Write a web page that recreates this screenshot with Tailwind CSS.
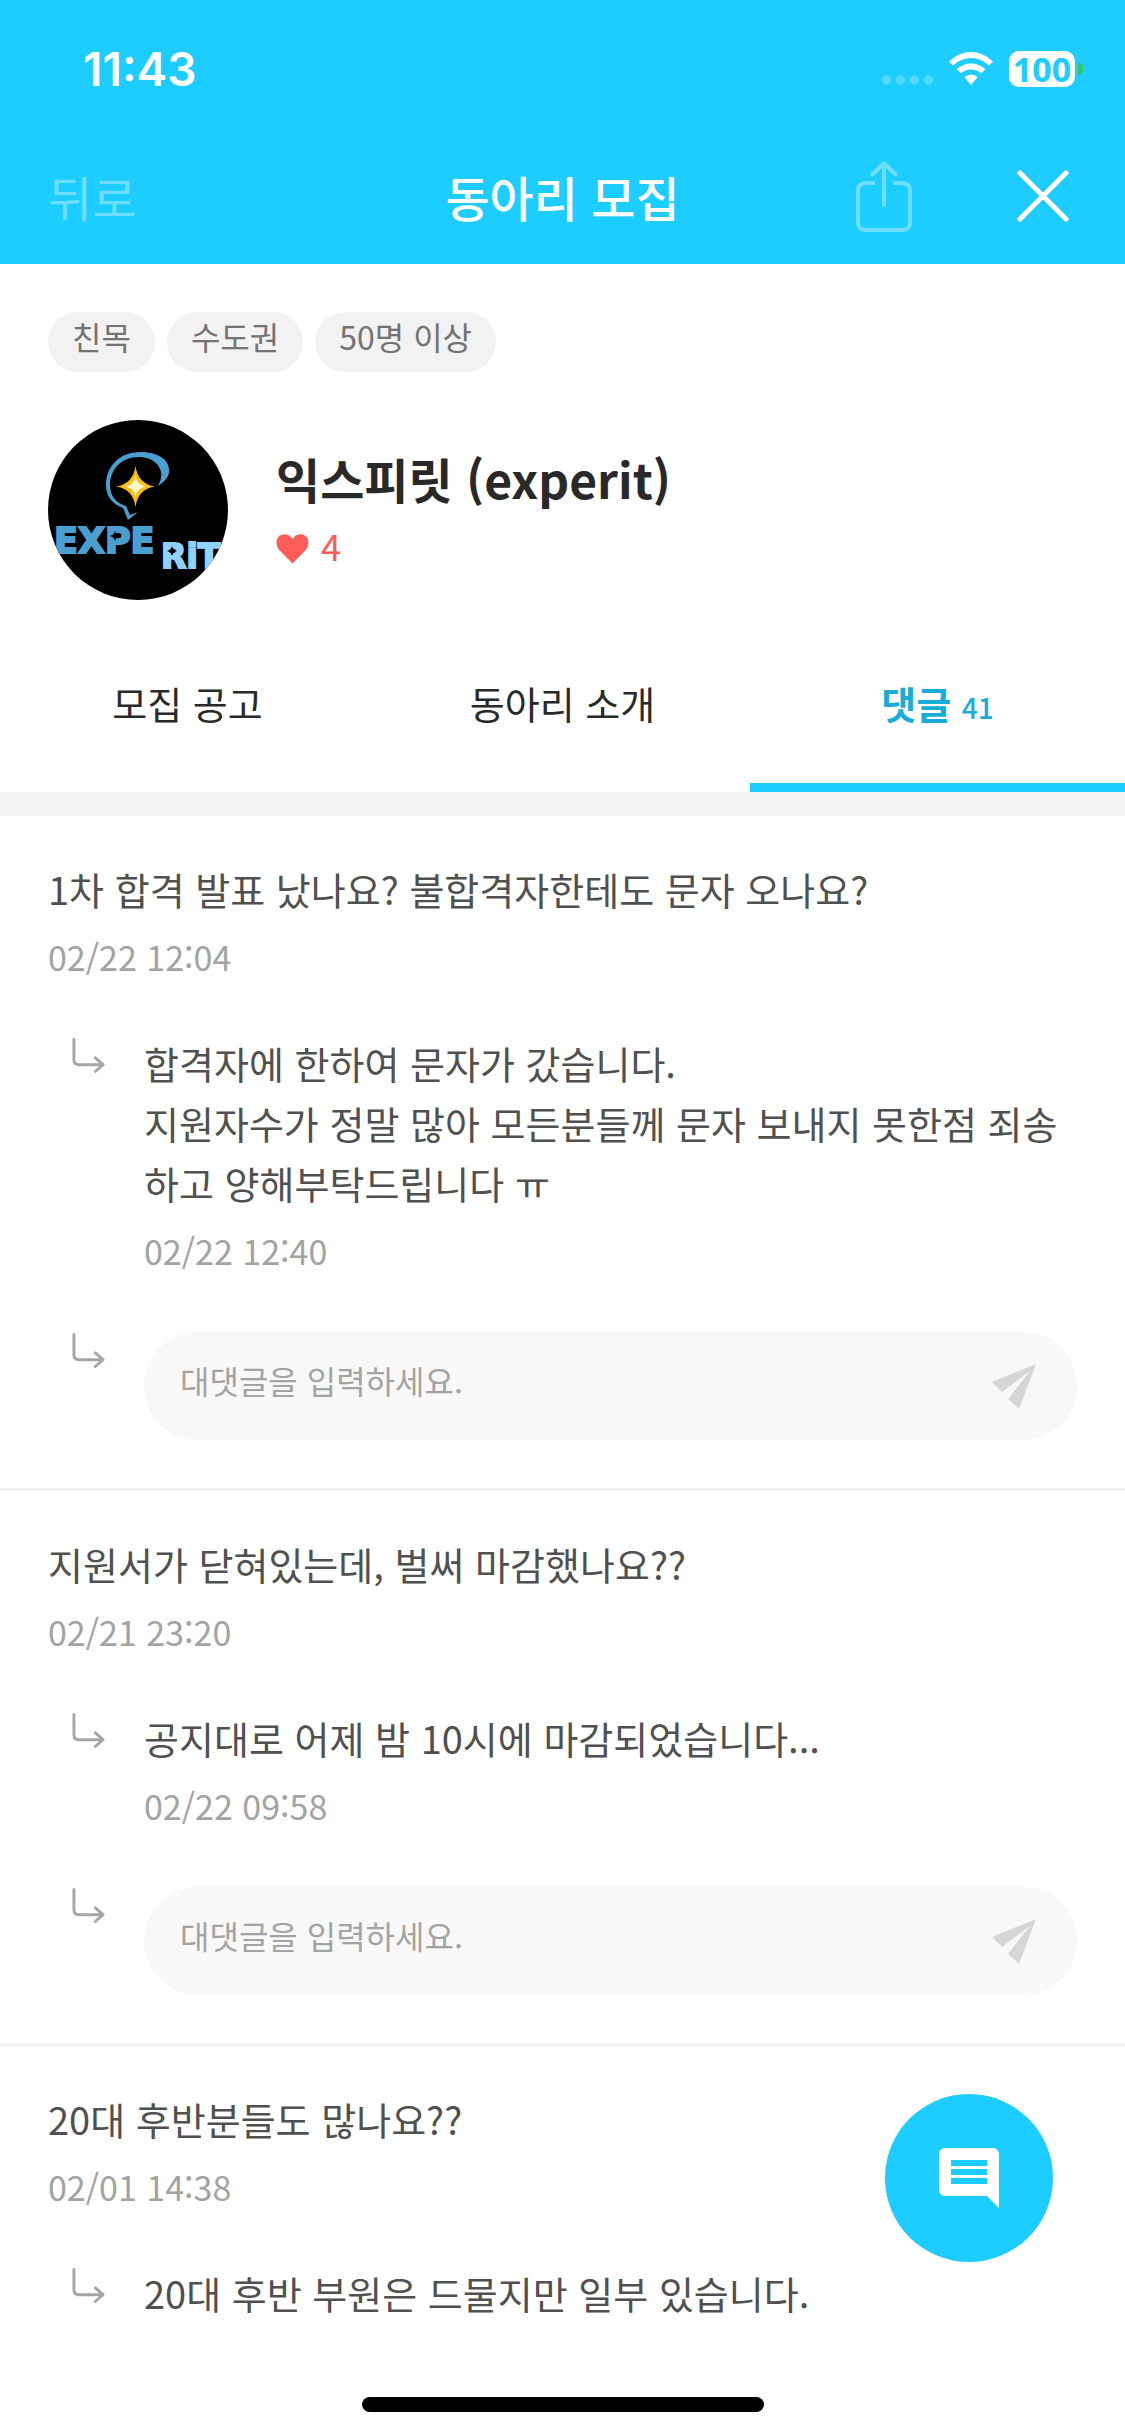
<!DOCTYPE html>
<html lang="ko">
<head>
    <meta charset="UTF-8">
    <meta name="viewport" content="width=device-width, initial-scale=1.0">
    <title>동아리 모집</title>
    <script src="https://cdn.jsdelivr.net/npm/@tailwindcss/browser@4"></script>
    <style>
        body {
            font-family: 'Noto Sans CJK KR', sans-serif;
        }
    </style>
</head>
<body class="bg-white text-[#292929]">
    <!-- Shared icons -->
    <svg class="hidden" aria-hidden="true">
        <symbol id="replyArrow" viewBox="0 0 34 36">
            <path d="M2 2v21q0 5 5 5h24M24 21l8 7l-8 7" fill="none" stroke="#a6a6a6" stroke-width="3" stroke-linecap="round" stroke-linejoin="round"/>
        </symbol>
        <symbol id="send" viewBox="0 0 44 45">
            <path d="M44 0L0 18l10 10L38 7L16 35l11 10z" fill="#d6d6d6"/>
        </symbol>
    </svg>

    <div class="min-h-screen overflow-hidden">
        <header class="bg-[#1ecdff] text-white">
            <!-- Status bar -->
            <div class="flex items-center justify-between h-[132px] pl-[83px] pr-[42px] pt-[6px]">
                <span class="font-[Inter] font-semibold text-[46px]">11:43</span>
                <div class="flex items-center gap-4">
                    <svg class="w-[51px] h-9" viewBox="0 0 51 36" fill="#fff" fill-opacity=".25">
                        <circle cx="4.500" cy="29" r="4.500"/><circle cx="18.500" cy="29" r="4.500"/><circle cx="32.500" cy="29" r="4.500"/><circle cx="46.500" cy="29" r="4.500"/>
                    </svg>
                    <svg class="w-11 h-9" viewBox="0 0 44 36" fill="#fff">
                        <path d="M0 10.500Q9.500 1 22 1T44 10.500L40 14.600Q32 7 22 7T4 14.600z"/>
                        <path d="M7.600 18Q14 12.400 22 12.400T36.400 18L32.300 22.200Q27.800 18.400 22 18.400T11.700 22.200z"/>
                        <path d="M15.300 26Q22 21 28.700 26L22 34z"/>
                    </svg>
                    <div class="flex items-center gap-[3px]">
                        <span class="flex items-center justify-center w-[66px] h-9 rounded-[10px] bg-white text-[#1ecdff] font-['Noto_Sans'] font-bold text-[34px] leading-9">100</span>
                        <span class="w-[5px] h-3 rounded-r-full bg-[#34c759]"></span>
                    </div>
                </div>
            </div>
            <!-- Nav bar -->
            <div class="grid grid-cols-3 items-center h-[132px] px-12 pb-1">
                <button type="button" class="justify-self-start text-[48px] leading-[60px] text-white/35">뒤로</button>
                <h1 class="justify-self-center text-[48px] leading-[60px] font-medium">동아리 모집</h1>
                <div class="justify-self-end flex items-center gap-[104px] pr-2">
                    <button type="button" aria-label="공유">
                        <svg class="w-[58px] h-[74px]" viewBox="0 0 58 74" fill="none" stroke="#fff" stroke-opacity=".35" stroke-width="4" stroke-linecap="round" stroke-linejoin="round">
                            <path d="M20 24h-9q-8 0-8 8v31q0 8 8 8h36q8 0 8-8v-31q0-8-8-8h-9" stroke-linecap="butt"/>
                            <path d="M29 46V4M17.500 15.500L29 4l11.500 11.500"/>
                        </svg>
                    </button>
                    <button type="button" aria-label="닫기">
                        <svg class="w-[52px] h-[52px]" viewBox="0 0 52 52" stroke="#fff" stroke-width="5" stroke-linecap="round">
                            <path d="M3 3l46 46M49 3L3 49"/>
                        </svg>
                    </button>
                </div>
            </div>
        </header>

        <!-- Club summary -->
        <section class="px-12 pt-12">
            <ul class="flex gap-3 text-[32px] text-[#737373]">
                <li class="h-[60px] px-6 rounded-full bg-[#f2f2f2] leading-[48px]">친목</li>
                <li class="h-[60px] px-6 rounded-full bg-[#f2f2f2] leading-[48px]">수도권</li>
                <li class="h-[60px] px-6 rounded-full bg-[#f2f2f2] leading-[48px]">50명 이상</li>
            </ul>
            <div class="flex items-center gap-12 mt-12">
                <svg class="w-[180px] h-[180px] rounded-full shrink-0" viewBox="0 0 180 180" role="img" aria-label="experit">
                    <defs>
                        <path id="spark" d="M0-5Q1-1 5 0Q1 1 0 5Q-1 1-5 0Q-1-1 0-5z"/>
                    </defs>
                    <rect width="180" height="180" fill="#000"/>
                    <path d="M110 66C118 61 122 55 121 49C120 38 108 32 92 32C72 32 58 46 58 65C58 76 64 84 75 88L80 100L90 92L82 95L78 86C68 83 62 76 62 65C62 49 74 37 90 37C103 37 111 43 113 52C114 58 112 62 110 66z" fill="#4a9fd0"/>
                    <path d="M87.500 46Q90 64 107 66.500Q90 69 87.500 87Q85 69 68 66.500Q85 64 87.500 46z" fill="#f7bd14"/>
                    <path d="M87.500 56Q89 65 98 66.500Q89 68 87.500 77Q86 68 77 66.500Q86 65 87.500 56z" fill="#fff6c8"/>
                    <g font-family="DejaVu Sans" font-weight="700" stroke-width="2">
                        <text x="6" y="133" font-size="35" fill="#4a9fd0" stroke="#4a9fd0">EXPE</text>
                        <text x="113" y="148" font-size="33" fill="#8fd2fb" stroke="#8fd2fb">RiT</text>
                    </g>
                    <use href="#spark" x="67" y="116"/>
                    <use href="#spark" x="124" y="131"/>
                </svg>
                <div>
                    <h2 class="text-[48px] leading-[66px] font-bold">익스피릿 (experit)</h2>
                    <p class="flex items-center gap-3 mt-1 text-[36px] leading-[60px] text-[#ff5c57]">
                        <svg class="w-[33px] h-[38px]" viewBox="0 0 34 38" fill="#ff5c57">
                            <path d="M17 38L4 25C-2 18 0 8 9 8C13 8 16 11 17 13C18 11 21 8 25 8C34 8 36 18 30 25z"/>
                        </svg>
                        4
                    </p>
                </div>
            </div>
        </section>

        <!-- Tabs -->
        <nav class="grid grid-cols-3 mt-[18px] text-[38px] text-center border-b-24 border-[#f2f2f2]">
            <a href="#" class="h-[174px] leading-[170px]">모집 공고</a>
            <a href="#" class="h-[174px] leading-[170px]">동아리 소개</a>
            <a href="#" class="h-[174px] leading-[170px] font-bold text-[#18add9] border-b-9 border-[#1ecdff]">댓글 <span class="text-[28px] font-medium">41</span></a>
        </nav>

        <!-- Comments -->
        <main class="text-[38px] leading-[60px] text-[#505050]">
            <article class="px-12 pt-[43px] pb-12 border-b-3 border-[#f2f2f2]">
                <p>1차 합격 발표 났나요? 불합격자한테도 문자 오나요?</p>
                <time class="block mt-3 text-[34px] leading-[52px] text-[#a3a3a3]">02/22 12:04</time>
                <div class="flex items-start gap-[39px] mt-[50px] pl-6">
                    <svg class="w-[33px] h-9 mt-1 shrink-0"><use href="#replyArrow"/></svg>
                    <div>
                        <p>합격자에 한하여 문자가 갔습니다.<br>지원자수가 정말 많아 모든분들께 문자 보내지 못한점 죄송<br>하고 양해부탁드립니다 ㅠ</p>
                        <time class="block mt-3 text-[34px] leading-[52px] text-[#a3a3a3]">02/22 12:40</time>
                    </div>
                </div>
                <form class="flex items-start gap-[39px] mt-[55px] pl-6">
                    <svg class="w-[33px] h-9 shrink-0"><use href="#replyArrow"/></svg>
                    <div class="flex items-center flex-1 h-[108px] px-9 rounded-full bg-[#f8f8f8]">
                        <input type="text" aria-label="대댓글" placeholder="대댓글을 입력하세요." class="flex-1 min-w-0 pb-3 text-[32px] outline-none placeholder:text-[#a3a3a3]">
                        <button type="button" aria-label="보내기" class="mr-[5px]"><svg class="w-11 h-[45px]"><use href="#send"/></svg></button>
                    </div>
                </form>
            </article>

            <article class="px-12 pt-[43px] pb-12 border-b-3 border-[#f2f2f2]">
                <p>지원서가 닫혀있는데, 벌써 마감했나요??</p>
                <time class="block mt-3 text-[34px] leading-[52px] text-[#a3a3a3]">02/21 23:20</time>
                <div class="flex items-start gap-[39px] mt-[50px] pl-6">
                    <svg class="w-[33px] h-9 mt-1 shrink-0"><use href="#replyArrow"/></svg>
                    <div>
                        <p>공지대로 어제 밤 10시에 마감되었습니다...</p>
                        <time class="block mt-3 text-[34px] leading-[52px] text-[#a3a3a3]">02/22 09:58</time>
                    </div>
                </div>
                <form class="flex items-start gap-[39px] mt-[55px] pl-6">
                    <svg class="w-[33px] h-9 shrink-0"><use href="#replyArrow"/></svg>
                    <div class="flex items-center flex-1 h-[108px] px-9 rounded-full bg-[#f8f8f8]">
                        <input type="text" aria-label="대댓글" placeholder="대댓글을 입력하세요." class="flex-1 min-w-0 pb-3 text-[32px] outline-none placeholder:text-[#a3a3a3]">
                        <button type="button" aria-label="보내기" class="mr-[5px]"><svg class="w-11 h-[45px]"><use href="#send"/></svg></button>
                    </div>
                </form>
            </article>

            <article class="px-12 pt-[43px] pb-12">
                <p>20대 후반분들도 많나요??</p>
                <time class="block mt-3 text-[34px] leading-[52px] text-[#a3a3a3]">02/01 14:38</time>
                <div class="flex items-start gap-[39px] mt-[50px] pl-6">
                    <svg class="w-[33px] h-9 mt-1 shrink-0"><use href="#replyArrow"/></svg>
                    <p>20대 후반 부원은 드물지만 일부 있습니다.</p>
                </div>
            </article>
        </main>
    </div>

    <!-- Write comment -->
    <button type="button" aria-label="댓글 쓰기" class="fixed right-[72px] bottom-[174px] flex items-center justify-center w-[168px] h-[168px] rounded-full bg-[#1ecdff]">
        <svg class="w-[72px] h-[72px]" viewBox="0 0 24 24" fill="#fff">
            <path d="M21.990 4c0-1.100-.89-2-1.990-2H4c-1.100 0-2 .9-2 2v12c0 1.100.9 2 2 2h14l4 4-.01-18zM18 14H6v-2h12v2zm0-3H6V9h12v2zm0-3H6V6h12v2z"/>
        </svg>
    </button>
    <!-- Home indicator -->
    <div class="fixed bottom-6 left-1/2 -translate-x-1/2 w-[402px] h-[15px] rounded-full bg-black"></div>
</body>
</html>
